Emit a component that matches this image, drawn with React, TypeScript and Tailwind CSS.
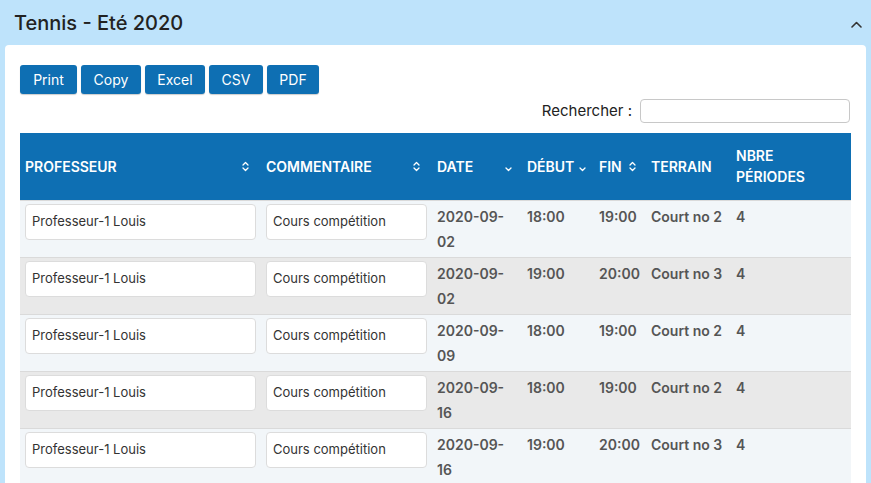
import React from "react";

type Row = {
  prof: string;
  comment: string;
  date: string;
  start: string;
  end: string;
  court: string;
  periods: string;
};

const rows: Row[] = [
  { prof: "Professeur-1 Louis", comment: "Cours compétition", date: "2020-09-02", start: "18:00", end: "19:00", court: "Court no 2", periods: "4" },
  { prof: "Professeur-1 Louis", comment: "Cours compétition", date: "2020-09-02", start: "19:00", end: "20:00", court: "Court no 3", periods: "4" },
  { prof: "Professeur-1 Louis", comment: "Cours compétition", date: "2020-09-09", start: "18:00", end: "19:00", court: "Court no 2", periods: "4" },
  { prof: "Professeur-1 Louis", comment: "Cours compétition", date: "2020-09-16", start: "18:00", end: "19:00", court: "Court no 2", periods: "4" },
  { prof: "Professeur-1 Louis", comment: "Cours compétition", date: "2020-09-16", start: "19:00", end: "20:00", court: "Court no 3", periods: "4" },
];

const buttons = [
  { label: "Print", w: "w-[57px]" },
  { label: "Copy", w: "w-[60px]" },
  { label: "Excel", w: "w-[60px]" },
  { label: "CSV", w: "w-[54px]" },
  { label: "PDF", w: "w-[52px]" },
];

function SortBoth() {
  return (
    <svg width="7" height="11" viewBox="0 0 7 11" fill="none" stroke="currentColor" strokeWidth="1.3" strokeLinecap="round" strokeLinejoin="round">
      <path d="M1 4 L3.5 1.5 L6 4" />
      <path d="M1 7 L3.5 9.5 L6 7" />
    </svg>
  );
}

function SortDown() {
  return (
    <svg width="7" height="11" viewBox="0 0 7 11" fill="none" stroke="currentColor" strokeWidth="1.3" strokeLinecap="round" strokeLinejoin="round">
      <path d="M1 7 L3.5 9.5 L6 7" />
    </svg>
  );
}

function HeadCell({ label, sort, className }: { label: React.ReactNode; sort?: "both" | "down"; className?: string }) {
  return (
    <th className={`px-[5px] text-left align-middle font-semibold ${className ?? ""}`}>
      <div className="flex items-center justify-between gap-1">
        <span>{label}</span>
        {sort === "both" ? <SortBoth /> : sort === "down" ? <SortDown /> : null}
      </div>
    </th>
  );
}

export default function App() {
  return (
    <div
      className="min-h-[483px] bg-[#bee3fb] text-[#222]"
      style={{ fontFamily: "Inter, 'Noto Sans', sans-serif" }}
    >
      <div className="flex h-[45px] items-center justify-between pl-[14px] pr-[9px]">
        <h1 className="text-[20px] font-medium text-[#222]">Tennis - Eté 2020</h1>
        <svg width="11" height="7" viewBox="0 0 11 7" fill="none" stroke="#333" strokeWidth="1.6" strokeLinecap="round" strokeLinejoin="round" className="mt-1">
          <path d="M1 6 L5.5 1.5 L10 6" />
        </svg>
      </div>

      <div className="mx-[5px] min-h-[438px] rounded-t-[4px] bg-white px-[15px] pt-[20px]">
        <div className="flex gap-[4px]">
          {buttons.map((b) => (
            <button
              key={b.label}
              className={`h-[29px] ${b.w} rounded-[3px] bg-[#0e6fb3] text-center text-[14px] font-normal text-white shadow-[0_1px_1px_rgba(0,0,0,0.2)]`}
            >
              {b.label}
            </button>
          ))}
        </div>

        <div className="mt-[5px] flex items-center justify-end gap-[8px] pr-px">
          <span className="text-[15px] text-[#222]">Rechercher :</span>
          <input className="h-[24px] w-[210px] rounded-[4px] border border-[#c8c8c8] bg-white" />
        </div>

        <table className="mt-[10px] w-full table-fixed border-collapse text-[14px]">
          <colgroup>
            <col className="w-[241px]" />
            <col className="w-[171px]" />
            <col className="w-[90px]" />
            <col className="w-[72px]" />
            <col className="w-[52px]" />
            <col className="w-[85px]" />
            <col />
          </colgroup>
          <thead>
            <tr className="h-[67px] bg-[#0e6fb3] text-white">
              <HeadCell label="PROFESSEUR" sort="both" className="pr-[12px]" />
              <HeadCell label="COMMENTAIRE" sort="both" className="pr-[12px]" />
              <HeadCell label="DATE" sort="down" className="pr-[10px]" />
              <HeadCell label="DÉBUT" sort="down" className="pr-[8px]" />
              <HeadCell label="FIN" sort="both" className="pr-[10px]" />
              <HeadCell label="TERRAIN" />
              <th className="px-[5px] text-left align-middle font-semibold leading-[21px]">
                NBRE
                <br />
                PÉRIODES
              </th>
            </tr>
          </thead>
          <tbody>
            {rows.map((r, i) => (
              <tr
                key={i}
                className={`border-t border-[#dadada] align-top ${i % 2 === 0 ? "bg-[#f2f6f9]" : "bg-[#e9e9e9]"}`}
              >
                <td className="px-[5px] pb-[3px] pt-[3px]">
                  <div className="flex h-[36px] items-center rounded-[4px] border border-[#dcdcdc] bg-white pl-[6px] text-[13px] text-[#333]">
                    {r.prof}
                  </div>
                </td>
                <td className="px-[5px] pb-[3px] pt-[3px]">
                  <div className="flex h-[36px] items-center rounded-[4px] border border-[#dcdcdc] bg-white pl-[6px] text-[13px] text-[#333]">
                    {r.comment}
                  </div>
                </td>
                <td className="px-[5px] pb-[3px] pt-[3px] font-semibold leading-[25px] text-[#555]">
                  {r.date.slice(0, 8)}
                  <br />
                  {r.date.slice(8)}
                </td>
                <td className="px-[5px] pt-[3px] font-semibold leading-[25px] text-[#555]">{r.start}</td>
                <td className="px-[5px] pt-[3px] font-semibold leading-[25px] text-[#555]">{r.end}</td>
                <td className="whitespace-nowrap px-[5px] pt-[3px] font-semibold leading-[25px] text-[#555]">{r.court}</td>
                <td className="px-[5px] pt-[3px] font-semibold leading-[25px] text-[#555]">{r.periods}</td>
              </tr>
            ))}
          </tbody>
        </table>
      </div>
    </div>
  );
}
